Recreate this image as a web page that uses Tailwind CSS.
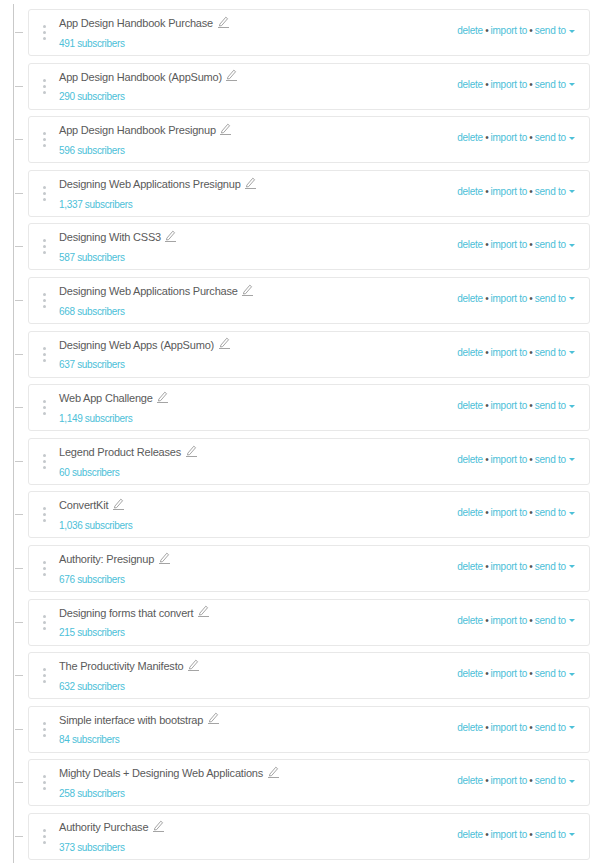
<!DOCTYPE html>
<html lang="en">
<head>
  <meta charset="UTF-8">
  <meta name="viewport" content="width=device-width, initial-scale=1">
  <title>Subscriber Lists</title>
  <script src="https://cdn.jsdelivr.net/npm/@tailwindcss/browser@4"></script>
</head>
<body class="bg-white h-[863px] overflow-hidden font-['Liberation_Sans',sans-serif]">
  <div class="relative h-full pt-[9px] pl-[28px] pr-[10px]">
    <!-- tree line on the left -->
    <div class="absolute left-[13px] top-[4px] bottom-0 w-[1px] bg-[#c9c9c9]"></div>
    <div id="lists" class="flex flex-col gap-[6.6px]"></div>
  </div>

  <template id="row">
    <div class="relative h-[47px] flex items-center rounded-[3px] border border-[#e8e8e8] bg-white">
      <div class="absolute left-[-14px] top-[22px] w-[8px] h-[1px] bg-[#c9c9c9]"></div>
      <div class="w-[30px] flex flex-col items-center gap-[3px] pl-[1px] shrink-0">
        <span class="w-[3px] h-[3px] rounded-full bg-[#c4c8cc]"></span>
        <span class="w-[3px] h-[3px] rounded-full bg-[#c4c8cc]"></span>
        <span class="w-[3px] h-[3px] rounded-full bg-[#c4c8cc]"></span>
      </div>
      <div class="flex-1 min-w-0 pt-[2px]">
        <div class="flex items-center gap-[4.5px] h-[14px] text-[11px] tracking-[-0.2px] text-[#5a5a5a]">
          <span class="name"></span>
          <svg class="w-[11px] h-[12px] mt-[-3px]" viewBox="0 0 11 12" fill="none" stroke="#9a9a9a" stroke-width="0.9">
            <path d="M1.8 8.2 7.8 1.2 9.6 2.7 3.6 9.6 1.5 10z"/>
            <path d="M0 11.5H11"/>
          </svg>
        </div>
        <div class="count mt-[6.5px] text-[10px] tracking-[-0.33px] leading-[14px] text-[#4cc0d8]"></div>
      </div>
      <div class="flex items-center gap-[2.25px] pr-[14px] mt-[-4px] text-[10px] tracking-[-0.27px] text-[#4cc0d8]">
        <a href="#">delete</a>
        <span class="text-[#555555]">&bull;</span>
        <a href="#">import to</a>
        <span class="text-[#555555]">&bull;</span>
        <a href="#">send to</a>
        <span class="ml-[1px] mt-[1px] w-0 h-0 border-x-[3px] border-x-transparent border-t-[3px] border-t-[#4cc0d8]"></span>
      </div>
    </div>
  </template>

  <script>
    const lists = [
      ['App Design Handbook Purchase', '491'],
      ['App Design Handbook (AppSumo)', '290'],
      ['App Design Handbook Presignup', '596'],
      ['Designing Web Applications Presignup', '1,337'],
      ['Designing With CSS3', '587'],
      ['Designing Web Applications Purchase', '668'],
      ['Designing Web Apps (AppSumo)', '637'],
      ['Web App Challenge', '1,149'],
      ['Legend Product Releases', '60'],
      ['ConvertKit', '1,036'],
      ['Authority: Presignup', '676'],
      ['Designing forms that convert', '215'],
      ['The Productivity Manifesto', '632'],
      ['Simple interface with bootstrap', '84'],
      ['Mighty Deals + Designing Web Applications', '258'],
      ['Authority Purchase', '373']
    ];

    const container = document.getElementById('lists');
    const template = document.getElementById('row');

    lists.forEach(([name, count]) => {
      const row = template.content.cloneNode(true);
      row.querySelector('.name').textContent = name;
      row.querySelector('.count').textContent = count + ' subscribers';
      container.appendChild(row);
    });
  </script>
</body>
</html>
